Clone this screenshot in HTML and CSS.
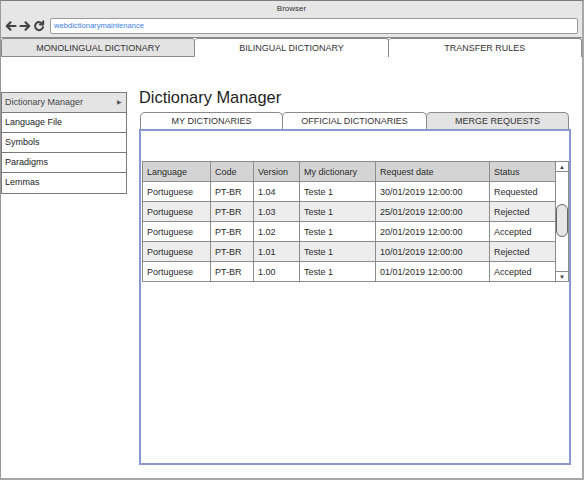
FILE: index.html
```html
<!DOCTYPE html>
<html lang="en">
<head>
    <meta charset="UTF-8">
    <title>Dictionary Manager</title>
    <link rel="stylesheet" href="styles.css">
</head>
<body>
    <div class="window">
        <!-- Browser chrome -->
        <div class="titlebar">
            <div class="title">Browser</div>
            <div class="nav-row">
                <div class="nav-icons">
                    <svg width="12" height="12" viewBox="0 0 12 12" fill="none" stroke="#444" stroke-width="2.2" stroke-linecap="round" stroke-linejoin="round">
                        <path d="M10.5 6H2"></path>
                        <path d="M5.5 2.3L1.8 6l3.7 3.7"></path>
                    </svg>
                    <svg width="12" height="12" viewBox="0 0 12 12" fill="none" stroke="#444" stroke-width="2.2" stroke-linecap="round" stroke-linejoin="round">
                        <path d="M1.5 6H10"></path>
                        <path d="M6.5 2.3L10.2 6 6.5 9.7"></path>
                    </svg>
                    <svg width="12" height="12" viewBox="0 0 12 12" fill="none" stroke="#444" stroke-width="2" stroke-linecap="round">
                        <path d="M9.6 4.2A4 4 0 1 0 10 7"></path>
                        <path d="M10.2 1.2V4.4H7" stroke-linejoin="round"></path>
                    </svg>
                </div>
                <div class="address">webdictionarymaintenance</div>
            </div>
        </div>

        <!-- Top tabs -->
        <div class="top-tabs">
            <div class="top-tab active">MONOLINGUAL DICTIONARY</div>
            <div class="top-tab">BILINGUAL DICTIONARY</div>
            <div class="top-tab">TRANSFER RULES</div>
        </div>

        <div class="content">
            <!-- Side menu -->
            <ul class="side-menu">
                <li class="active">Dictionary Manager <span class="arrow">&#9654;</span></li>
                <li>Language File</li>
                <li>Symbols</li>
                <li>Paradigms</li>
                <li>Lemmas</li>
            </ul>

            <div class="main">
                <h1 class="page-title">Dictionary Manager</h1>

                <div class="tabs">
                    <div class="tab">MY DICTIONARIES</div>
                    <div class="tab">OFFICIAL DICTIONARIES</div>
                    <div class="tab active">MERGE REQUESTS</div>
                </div>

                <div class="panel">
                    <div class="grid">
                        <table class="requests">
                            <colgroup>
                                <col style="width:68px">
                                <col style="width:43px">
                                <col style="width:46px">
                                <col style="width:76px">
                                <col style="width:114px">
                                <col style="width:66px">
                            </colgroup>
                            <thead>
                                <tr>
                                    <th>Language</th>
                                    <th>Code</th>
                                    <th>Version</th>
                                    <th>My dictionary</th>
                                    <th>Request date</th>
                                    <th>Status</th>
                                </tr>
                            </thead>
                            <tbody>
                                <tr><td>Portuguese</td><td>PT-BR</td><td>1.04</td><td>Teste 1</td><td>30/01/2019 12:00:00</td><td>Requested</td></tr>
                                <tr><td>Portuguese</td><td>PT-BR</td><td>1.03</td><td>Teste 1</td><td>25/01/2019 12:00:00</td><td>Rejected</td></tr>
                                <tr><td>Portuguese</td><td>PT-BR</td><td>1.02</td><td>Teste 1</td><td>20/01/2019 12:00:00</td><td>Accepted</td></tr>
                                <tr><td>Portuguese</td><td>PT-BR</td><td>1.01</td><td>Teste 1</td><td>10/01/2019 12:00:00</td><td>Rejected</td></tr>
                                <tr><td>Portuguese</td><td>PT-BR</td><td>1.00</td><td>Teste 1</td><td>01/01/2019 12:00:00</td><td>Accepted</td></tr>
                            </tbody>
                        </table>
                        <div class="scrollbar">
                            <div class="scroll-btn">&#9650;</div>
                            <div class="scroll-track">
                                <div class="scroll-thumb"></div>
                            </div>
                            <div class="scroll-btn down">&#9660;</div>
                        </div>
                    </div>
                </div>
            </div>
        </div>
    </div>
</body>
</html>
```

FILE: styles.css
```css
/* Reset and base styles */
* {
    margin: 0;
    padding: 0;
    box-sizing: border-box;
}

body {
    font-family: "Liberation Sans", Arial, sans-serif;
    background-color: #ffffff;
    color: #222222;
}

.window {
    width: 584px;
    height: 480px;
    border: 2px solid #a8a8a8;
    border-left: 1px solid #9a9a9a;
    border-top: 1px solid #7d7d7d;
    display: flex;
    flex-direction: column;
}

/* Browser chrome */
.titlebar {
    height: 37px;
    background-color: #e6e6e6;
    border-bottom: 1px solid #8a8a8a;
    padding-top: 2px;
}

.title {
    height: 12px;
    line-height: 12px;
    font-size: 8px;
    text-align: center;
    color: #333333;
}

.nav-row {
    display: flex;
    align-items: center;
    margin-top: 3px;
}

.nav-icons {
    width: 49px;
    padding-left: 4px;
    display: flex;
    gap: 2px;
}

.nav-icons svg {
    display: block;
}

.address {
    flex: 1;
    height: 16px;
    margin-right: 4px;
    background-color: #ffffff;
    border: 1px solid #9a9a9a;
    border-radius: 2px;
    padding-left: 3px;
    font-size: 7.6px;
    line-height: 14px;
    color: #3c7fe6;
}

/* Top tabs */
.top-tabs {
    display: flex;
    height: 19px;
}

.top-tab {
    flex: 1;
    border: 1px solid #8a8a8a;
    border-bottom: none;
    border-left: none;
    border-radius: 3px 3px 0 0;
    font-size: 9px;
    line-height: 18px;
    text-align: center;
    color: #333333;
    background-color: #ffffff;
}

.top-tab:first-child {
    border-left: 1px solid #8a8a8a;
}

.top-tab.active {
    background-color: #e3e3e3;
    border-bottom: 1px solid #8a8a8a;
}

/* Content */
.content {
    flex: 1;
    display: flex;
    align-items: flex-start;
}

.side-menu {
    list-style: none;
    width: 126px;
    margin-top: 35px;
    border: 1px solid #7a7a7a;
}

.side-menu li {
    height: 20px;
    line-height: 19px;
    padding-left: 3px;
    font-size: 9px;
    color: #222222;
    border-bottom: 1px solid #7a7a7a;
    position: relative;
}

.side-menu li:last-child {
    border-bottom: none;
}

.side-menu li.active {
    background-color: #e4e4e4;
    color: #444444;
}

.side-menu .arrow {
    position: absolute;
    right: 4px;
    top: 0;
    font-size: 6px;
    color: #555555;
}

.main {
    margin-left: 12px;
    margin-top: 30px;
}

.page-title {
    font-size: 16.4px;
    font-weight: normal;
    line-height: 20px;
    height: 20px;
    margin-bottom: 5px;
    color: #1e1e1e;
}

/* Inner tabs */
.tabs {
    display: flex;
    height: 17px;
    margin-left: 1px;
}

.tab {
    width: 143px;
    border: 1px solid #8a8a8a;
    border-bottom: none;
    border-radius: 5px 5px 0 0;
    font-size: 9px;
    line-height: 16px;
    text-align: center;
    color: #333333;
    background-color: #ffffff;
}

.tab + .tab {
    margin-left: -1px;
}

.tab:nth-child(2) {
    width: 145px;
}

.tab.active {
    background-color: #e3e3e3;
}

.panel {
    width: 432px;
    height: 336px;
    border: 2px solid #8a99cf;
    padding: 30px 0 0 1px;
}

.grid {
    display: flex;
    align-items: stretch;
}

/* Table */
.requests {
    width: 413px;
    border-collapse: collapse;
    table-layout: fixed;
    font-size: 9px;
    color: #2a2a2a;
}

.requests th,
.requests td {
    height: 20px;
    border: 1px solid #8c8c8c;
    padding: 0 0 0 4px;
    text-align: left;
    font-weight: normal;
    white-space: nowrap;
}

.requests th {
    background-color: #d4d4d4;
}

.requests tbody tr:nth-child(even) td {
    background-color: #ededed;
}

/* Scrollbar */
.scrollbar {
    width: 14px;
    border: 1px solid #8c8c8c;
    border-left: none;
    display: flex;
    flex-direction: column;
    background-color: #ffffff;
}

.scroll-btn {
    height: 10px;
    font-size: 6px;
    line-height: 10px;
    text-align: center;
    color: #444444;
    border-bottom: 1px solid #8c8c8c;
}

.scroll-btn.down {
    border-bottom: none;
    border-top: 1px solid #8c8c8c;
}

.scroll-track {
    flex: 1;
    padding-top: 32px;
}

.scroll-thumb {
    width: 12px;
    height: 33px;
    border: 1px solid #666666;
    border-radius: 6px;
    background-color: #e6e6e6;
}
```
